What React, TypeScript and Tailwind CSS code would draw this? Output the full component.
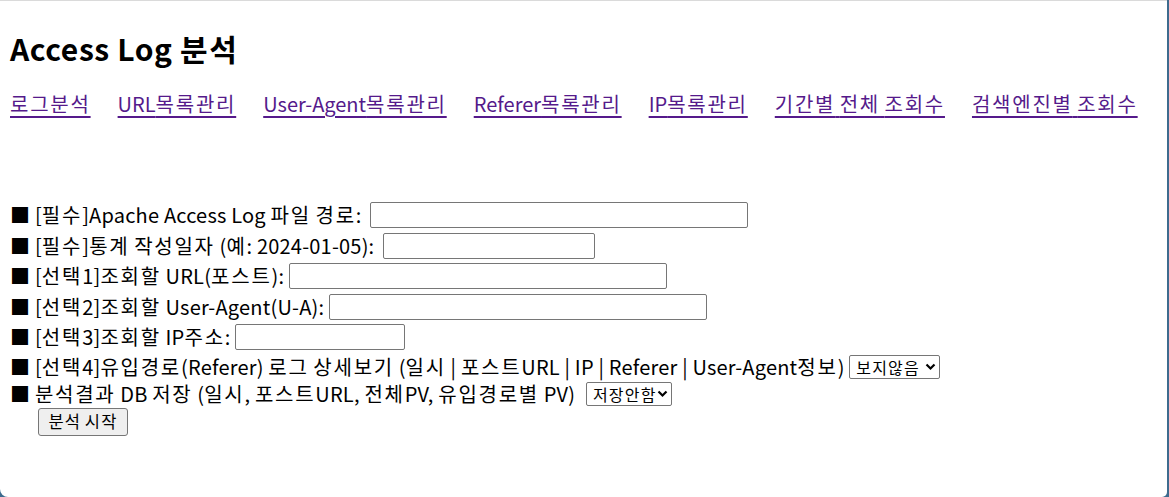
import React from "react";

const links = [
  "로그분석",
  "URL목록관리",
  "User-Agent목록관리",
  "Referer목록관리",
  "IP목록관리",
  "기간별 전체 조회수",
  "검색엔진별 조회수",
];

function K({ t, small, lat }: { t: string; small?: boolean; lat?: string }) {
  const parts = t.split(/([\uAC00-\uD7A3]+)/);
  return (
    <>
      {parts.map((p, i) =>
        /[\uAC00-\uD7A3]/.test(p) ? (
          <span key={i} className={small ? "tracking-[1.2px]" : "tracking-[1.75px]"}>
            {p}
          </span>
        ) : (
          <span key={i} className={lat ?? ""}>
            {p}
          </span>
        )
      )}
    </>
  );
}

function Input({ w }: { w: string }) {
  return <span className={`inline-block h-[26px] ${w} shrink-0 rounded-[2px] border border-[#767676] bg-white`} />;
}

function Select({ label, w }: { label: string; w: string }) {
  return (
    <span
      className={`inline-flex h-[24px] ${w} shrink-0 items-center justify-between rounded-[2px] border border-[#767676] bg-white pl-[6px] pr-[3px] text-[16px] leading-none text-black`}
    >
      <span>
        <K t={label} small />
      </span>
      <svg width="11" height="8" viewBox="0 0 11 8" className="shrink-0">
        <path d="M1.5 1.5 L5.5 5.5 L9.5 1.5" fill="none" stroke="#000" strokeWidth="2.2" />
      </svg>
    </span>
  );
}

function Row({ h, children }: { h: string; children: React.ReactNode }) {
  return <div className={`flex ${h} items-center whitespace-pre`}>{children}</div>;
}

const L = "tracking-[0.2px]";

export default function App() {
  return (
    <div className="h-[497px] w-[1169px] bg-[#3d6b8e]" style={{ fontFamily: '"Noto Sans CJK KR", "Noto Sans", sans-serif' }}>
      <div className="h-[497px] w-[1167px] overflow-hidden rounded-bl-[8px] rounded-br-[5px] border-t border-[#dadada] bg-white pl-[10px] text-black">
        <h1 className="mt-[27px] h-[40px] text-[30px] font-bold leading-[40px]">
          <K t="Access Log 분석" lat="tracking-[0.6px]" />
        </h1>
        <nav className="mt-[24px] flex h-[24px] items-center gap-[27px] text-[20px] leading-[24px]">
          {links.map((l) => (
            <a key={l} href="#" className="text-[#551a8b] underline decoration-[1.5px] underline-offset-[4px]">
              <K t={l} />
            </a>
          ))}
        </nav>
        <div className="mt-[84px] text-[20px] leading-[24px]">
          <Row h="h-[30.5px]">
            <K lat={L} t="■ [필수]Apache Access Log 파일 경로: " />
            <span className="w-[4px]" />
            <Input w="w-[378px]" />
          </Row>
          <Row h="h-[30.5px]">
            <K lat={L} t="■ [필수]통계 작성일자 (예: 2024-01-05): " />
            <span className="w-[4px]" />
            <Input w="w-[212px]" />
          </Row>
          <Row h="h-[30.5px]">
            <K lat={L} t="■ [선택1]조회할 URL(포스트): " />
            <Input w="w-[378px]" />
          </Row>
          <Row h="h-[30.5px]">
            <K lat={L} t="■ [선택2]조회할 User-Agent(U-A): " />
            <Input w="w-[378px]" />
          </Row>
          <Row h="h-[30.5px]">
            <K lat={L} t="■ [선택3]조회할 IP주소: " />
            <Input w="w-[170px]" />
          </Row>
          <Row h="h-[28px]">
            <K lat={L} t="■ [선택4]유입경로(Referer) 로그 상세보기 (일시 | 포스트URL | IP | Referer | User-Agent정보) " />
            <Select label="보지않음" w="w-[91px]" />
          </Row>
          <Row h="h-[27px]">
            <K lat={L} t="■ 분석결과 DB 저장 (일시, 포스트URL, 전체PV, 유입경로별 PV) " />
            <span className="w-[6px]" />
            <Select label="저장안함" w="w-[86px]" />
          </Row>
          <div className="flex h-[28px] items-center pl-[28px]">
            <button className="h-[28px] w-[90px] rounded-[3px] border border-[#767676] bg-[#efefef] text-[16.5px] leading-none text-black">
              <K t="분석 시작" small />
            </button>
          </div>
        </div>
      </div>
    </div>
  );
}
